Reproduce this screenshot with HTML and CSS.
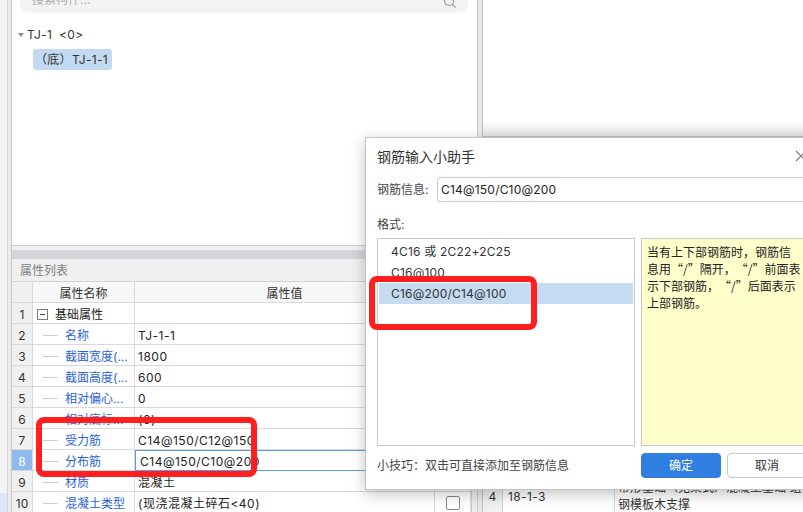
FILE: index.html
```html
<!DOCTYPE html>
<html lang="zh-CN">
<head>
<meta charset="utf-8">
<title>钢筋输入小助手</title>
<link rel="stylesheet" href="styles.css">
</head>
<body>
<div class="app">
  <div class="gutter"><div class="gutter-sel"></div></div>
  <div class="left">
    <div class="left-inner">
      <div class="tree-panel">
        <div class="search">
          <span class="search-ph">搜索构件...</span>
          <svg class="search-ico" width="14" height="14" viewBox="0 0 14 14"><circle cx="6" cy="6" r="4.5" fill="none" stroke="#9a9a9a" stroke-width="1.2"/><line x1="9.3" y1="9.3" x2="12.6" y2="12.6" stroke="#9a9a9a" stroke-width="1.3"/></svg>
        </div>
        <div class="tree-root"><span class="caret"></span><span>TJ-1</span><span class="count">&lt;0&gt;</span></div>
        <div class="tree-item">（底）TJ-1-1</div>
      </div>
      <div class="split-gap"></div>
      <div class="prop-bar"></div>
      <div class="prop-title">属性列表</div>
      <div class="prop-wrap">
        <div class="prop-table">
          <div class="c n hd"></div><div class="c hd">属性名称</div><div class="c hd">属性值</div><div class="c hd">附加</div>
          <div class="c n">1</div><div class="c nm root"><span class="tog"></span>基础属性</div><div class="c v"></div><div class="c k"></div>
          <div class="c n">2</div><div class="c nm">名称</div><div class="c v">TJ-1-1</div><div class="c k"><span class="cb"></span></div>
          <div class="c n">3</div><div class="c nm">截面宽度(...</div><div class="c v">1800</div><div class="c k"><span class="cb"></span></div>
          <div class="c n">4</div><div class="c nm">截面高度(...</div><div class="c v">600</div><div class="c k"><span class="cb"></span></div>
          <div class="c n">5</div><div class="c nm">相对偏心...</div><div class="c v">0</div><div class="c k"><span class="cb"></span></div>
          <div class="c n">6</div><div class="c nm">相对底标...</div><div class="c v">(0)</div><div class="c k"><span class="cb"></span></div>
          <div class="c n">7</div><div class="c nm">受力筋</div><div class="c v">C14@150/C12@150</div><div class="c k"><span class="cb"></span></div>
          <div class="c n sel">8</div><div class="c nm">分布筋</div><div class="c v edit">C14@150/C10@200</div><div class="c k"><span class="cb"></span></div>
          <div class="c n">9</div><div class="c nm">材质</div><div class="c v">混凝土</div><div class="c k"><span class="cb"></span></div>
          <div class="c n">10</div><div class="c nm">混凝土类型</div><div class="c v">(现浇混凝土碎石&lt;40)</div><div class="c k"><span class="cb"></span></div>
        </div>
        <div class="prop-strip"></div>
      </div>
    </div>
  </div>
  <div class="splitter"></div>
  <div class="right">
    <div class="right-top"></div>
    <div class="right-bar"></div>
    <div class="right-body">
      <div class="rt-row">
        <div class="rt-n">4</div>
        <div class="rt-code">18-1-3</div>
        <div class="rt-desc"><div>带形基础（无梁式）混凝土基础 组合</div><div>钢模板木支撑</div></div>
      </div>
    </div>
  </div>
</div>

<div class="dialog">
  <div class="dlg-title">
    <span>钢筋输入小助手</span>
    <svg class="dlg-close" width="12" height="12" viewBox="0 0 12 12"><path d="M1 1 L11 11 M11 1 L1 11" stroke="#7a7a7a" stroke-width="1.1" fill="none"/></svg>
  </div>
  <div class="dlg-info">
    <span class="dlg-label">钢筋信息:</span>
    <div class="dlg-input">C14@150/C10@200</div>
  </div>
  <div class="dlg-fmt">格式:</div>
  <div class="dlg-lists">
    <div class="fmt-list">
      <div class="fmt-item">4C16 或 2C22+2C25</div>
      <div class="fmt-item">C16@100</div>
      <div class="fmt-item active">C16@200/C14@100</div>
    </div>
    <div class="fmt-note">当有上下部钢筋时，钢筋信<br>息用<span class="qo">“</span>/<span class="qc">”</span>隔开，<span class="qo">“</span>/<span class="qc">”</span>前面表<br>示下部钢筋，<span class="qo">“</span>/<span class="qc">”</span>后面表示<br>上部钢筋。</div>
  </div>
  <div class="dlg-foot">
    <div class="dlg-tip">小技巧：双击可直接添加至钢筋信息</div>
    <div class="dlg-btns">
      <div class="btn btn-ok">确定</div>
      <div class="btn btn-cancel">取消</div>
    </div>
  </div>
</div>

<div class="mark mark-a"></div>
<div class="mark mark-b"></div>
</body>
</html>
```
FILE: styles.css
```css
* { box-sizing: border-box; }
html, body { margin: 0; padding: 0; }
body {
  width: 803px;
  height: 512px;
  overflow: hidden;
  position: relative;
  font-family: Inter, "Noto Sans CJK SC", sans-serif;
  font-size: 12px;
  color: #222;
  background: #f3f3f3;
}
.app { display: flex; height: 512px; }

.gutter { width: 7px; background: #f4f4f4; display: flex; flex-direction: column; justify-content: flex-end; }
.gutter-sel { height: 19px; background: #dce8f8; }

.left {
  width: 470px;
  border-left: 1px solid #d6d6d6;
  padding-left: 3px;
  background: #ececec;
}
.left-inner {
  width: 466px;
  height: 100%;
  border-left: 1px solid #c6c6c6;
  display: flex;
  flex-direction: column;
}

.tree-panel {
  height: 246px;
  flex: none;
  background: #fff;
  border-bottom: 1px solid #cfcfcf;
}
.search {
  margin: -14px 9px 0 8px;
  height: 27px;
  border-radius: 9px;
  background: #f3f3f3;
  display: flex;
  align-items: center;
  justify-content: space-between;
  padding: 0 11px 0 12px;
}
.search-ph { color: #aaa; line-height: 27px; }
.search-ico { margin-top: 4px; }

.tree-root {
  margin-top: 12px;
  line-height: 20px;
  display: flex;
  align-items: center;
  color: #333;
  letter-spacing: 0.3px;
}
.caret {
  width: 0; height: 0;
  margin: 0 3px 0 6px;
  border-top: 4px solid #8a8a8a;
  border-left: 3px solid transparent;
  border-right: 3px solid transparent;
}
.count { margin-left: 7px; }
.tree-item {
  margin: 4px 0 0 21px;
  width: 79px;
  height: 21px;
  line-height: 21px;
  padding-left: 2px;
  border-radius: 3px;
  background: #c3d9f1;
  color: #333;
  white-space: nowrap;
  letter-spacing: 0.3px;
}

.split-gap { height: 4px; background: #f0f0f0; flex: none; }
.prop-bar { height: 9px; background: #d4d5d9; flex: none; }
.prop-title {
  height: 22px;
  line-height: 21px;
  padding: 1px 0 0 8px;
  background: #f0f0f0;
  color: #808080;
  flex: none;
}
.prop-wrap {
  display: flex;
  border-top: 1px solid #d2d2d2;
  flex: 1;
  background: #fff;
}
.prop-table {
  display: grid;
  grid-template-columns: 21px 102px 300px 36px;
  grid-auto-rows: 21px;
  width: 459px;
}
.prop-strip { flex: 1; background: #ececec; border-left: 1px solid #cdcdcd; }

.c {
  border-right: 1px solid #d9d9d9;
  border-bottom: 1px solid #d9d9d9;
  padding-top: 2px;
  line-height: 19px;
  white-space: nowrap;
  overflow: hidden;
  background: #fff;
}
.c.hd { background: #f7f7f7; text-align: center; color: #333; }
.c.n { background: #f0f0f0; text-align: center; color: #333; }
.c.n.sel { background: #8ebbeb; color: #fff; }
.nm { color: #2b63d8; display: flex; align-items: center; padding-left: 10px; }
.nm::before {
  content: "";
  width: 15px;
  height: 1px;
  background: #cbcbcb;
  margin-right: 7px;
  flex: none;
}
.nm.root { color: #222; padding-left: 4px; }
.nm.root::before { display: none; }
.tog {
  width: 11px; height: 11px;
  border: 1px solid #7d7d7d;
  margin-right: 7px;
  display: flex;
  align-items: center;
  justify-content: center;
  flex: none;
}
.tog::after { content: ""; width: 5px; height: 1px; background: #444; }
.v { padding-left: 3px; color: #222; letter-spacing: 0.5px; }
.v.edit { border: 1px solid #5d9cdc; padding: 1px 0 0 4px; line-height: 19px; }
.k { display: flex; align-items: center; justify-content: center; padding-top: 0; }
.cb {
  width: 14px; height: 14px;
  border: 1px solid #8a8a8a;
  border-radius: 2px;
  background: #fff;
  margin-top: 1px;
}

.splitter {
  width: 6px;
  background: #e9e9e9;
  border-left: 1px solid #c9c9c9;
  border-right: 1px solid #bdbdbd;
}
.right { flex: 1; display: flex; flex-direction: column; }
.right-top { height: 122px; background: #fff; flex: none; }
.right-bar {
  height: 15px;
  flex: none;
  background: linear-gradient(#fdfdfd, #e3e3e3);
  border-bottom: 1px solid #bcbcbc;
}
.right-body {
  flex: 1;
  background: #fbfbfb;
  display: flex;
  flex-direction: column;
  justify-content: flex-end;
}
.rt-row {
  height: 34px;
  display: grid;
  grid-template-columns: 20px 112px 1fr;
  border-top: 1px solid #d6d6d6;
  background: #fff;
  color: #333;
}
.rt-n { background: #f0f0f0; border-right: 1px solid #cfcfcf; text-align: center; padding-top: 9px; line-height: 17px; }
.rt-code { border-right: 1px solid #d6d6d6; padding: 9px 0 0 5px; line-height: 17px; letter-spacing: 0.4px; }
.rt-desc { padding: 0 0 0 3px; line-height: 17px; white-space: nowrap; overflow: hidden; }

.dialog {
  position: absolute;
  left: 365px;
  top: 137px;
  width: 454px;
  height: 353px;
  background: #fff;
  border: 1px solid #c4c4c4;
  box-shadow: 0 4px 14px rgba(0, 0, 0, 0.24);
  padding: 0 11px;
}
.dlg-title {
  padding-top: 9px;
  height: 29px;
  line-height: 20px;
  font-size: 14px;
  color: #333;
  display: flex;
  justify-content: space-between;
  align-items: center;
}
.dlg-close { margin-top: -2px; }
.dlg-info { display: flex; margin-top: 10px; height: 25px; }
.dlg-label { width: 60px; line-height: 25px; color: #444; flex: none; }
.dlg-input {
  flex: 1;
  border: 1px solid #c9c9c9;
  border-radius: 3px;
  padding-left: 3px;
  line-height: 23px;
  color: #222;
  letter-spacing: 0.2px;
}
.dlg-fmt { margin-top: 13px; line-height: 20px; color: #444; }
.dlg-lists {
  margin-top: 3px;
  height: 208px;
  display: grid;
  grid-template-columns: 258px 1fr;
  column-gap: 6px;
}
.fmt-list { border: 1px solid #c8c8c8; padding-top: 2px; background: #fff; }
.fmt-item { height: 21px; line-height: 21px; margin: 0 1px; padding-left: 12px; color: #333; letter-spacing: 0.2px; }
.fmt-item.active { background: #c4dbf2; }
.fmt-note {
  border: 1px solid #c8c8c8;
  background: #ffffcc;
  padding: 4px 5px;
  line-height: 17px;
  color: #222;
  white-space: nowrap;
  font-family: "Noto Sans CJK SC", sans-serif;
}
.qo, .qc { display: inline-block; width: 12px; }
.qo { text-align: right; }
.qc { text-align: left; }
.dlg-foot {
  margin-top: 7px;
  display: grid;
  grid-template-columns: 258px 1fr;
  column-gap: 6px;
  height: 25px;
}
.dlg-tip { line-height: 25px; color: #444; white-space: nowrap; }
.dlg-btns { display: flex; gap: 6px; }
.btn { width: 80px; height: 25px; line-height: 23px; text-align: center; border-radius: 4px; border: 1px solid #c8c8c8; }
.btn-ok { background: #2f7fe0; border-color: #2f7fe0; color: #fff; }
.btn-cancel { background: #fff; color: #333; }

.mark {
  position: absolute;
  border: 6px solid #ff1f1f;
  border-radius: 8px;
}
.mark-a { left: 36px; top: 417px; width: 221px; height: 60px; }
.mark-b { left: 369px; top: 276px; width: 168px; height: 54px; }
```
